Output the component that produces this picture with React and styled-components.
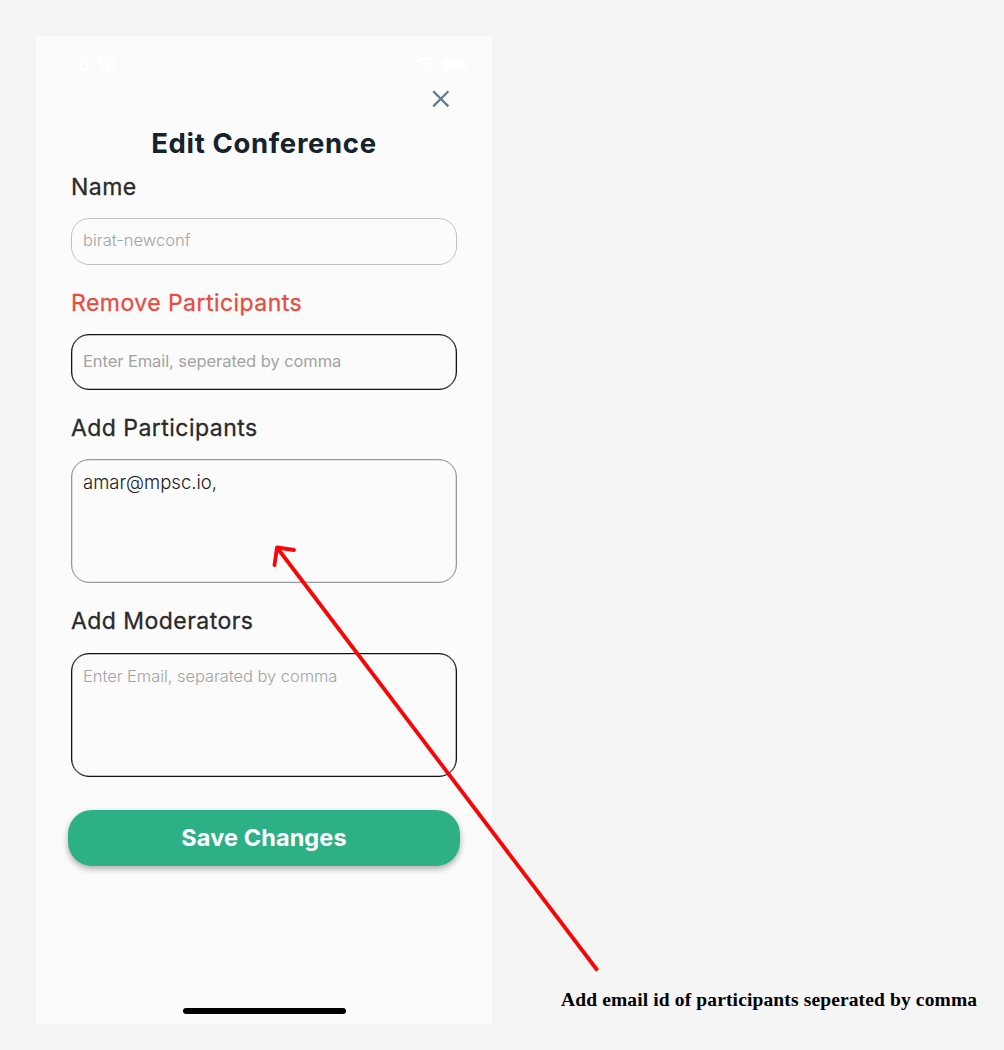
import React from 'react';
import styled, { createGlobalStyle } from 'styled-components';

const GlobalStyle = createGlobalStyle`
  *, *::before, *::after { box-sizing: border-box; }
  body { margin: 0; background: #f5f5f5; }
`;

const Page = styled.main`
  position: relative;
  width: 1004px;
  height: 1050px;
  padding: 36px 0 0 36px;
  display: flex;
  align-items: flex-start;
  overflow: hidden;
  background: #f5f5f5;
  font-family: Inter, Roboto, sans-serif;
`;

const Phone = styled.section`
  width: 456px;
  height: 988px;
  display: flex;
  flex-direction: column;
  background: #fbfbfb;
`;

const StatusBar = styled.div`
  height: 50px;
  padding: 16px 21px 0 42px;
  display: flex;
  justify-content: space-between;
  color: #fff;
`;

const Time = styled.span`
  font-size: 19px;
  font-weight: 600;
  line-height: 26px;
`;

const StatusIcons = styled.div`
  display: flex;
  gap: 7px;
  padding-top: 5px;
`;

const CloseButton = styled.button`
  width: 26px;
  height: 26px;
  padding: 0;
  border: 0;
  background: none;
  align-self: flex-end;
  margin-right: 38px;
`;

const Title = styled.h1`
  margin: 14px 0 0;
  height: 36px;
  text-align: center;
  font-size: 27.5px;
  font-weight: 700;
  line-height: 35px;
  letter-spacing: 0.65px;
  color: #15232d;
`;

const Form = styled.form`
  display: flex;
  flex-direction: column;
  padding: 10px 35px;
`;

const Label = styled.label`
  height: 30px;
  margin-bottom: ${({ $gap }) => $gap || '16px'};
  font-size: 23px;
  font-weight: 400;
  line-height: 30px;
  letter-spacing: 0.46px;
  color: ${({ $danger }) => ($danger ? '#e74c42' : '#2a2a2a')};
  -webkit-text-stroke: 0.3px currentColor;
`;

const Field = styled.div`
  height: ${({ $height }) => $height};
  margin-bottom: ${({ $after }) => $after};
  padding: ${({ $top }) => $top} 11px 0;
  border: 1px solid ${({ $stroke }) => $stroke};
  border-radius: 18px;
  box-shadow: ${({ $heavy, $stroke }) => ($heavy ? `inset 0 0 0 0.3px ${$stroke}` : 'none')};
  font-size: ${({ $size }) => $size || '16.5px'};
  font-weight: ${({ $weight }) => $weight || 300};
  line-height: 22px;
  letter-spacing: ${({ $track }) => $track || '0px'};
  color: ${({ $color }) => $color || '#a3a3a3'};
`;

const SaveButton = styled.button`
  height: 56px;
  margin: 0 -3px;
  padding: 0;
  border: 0;
  border-radius: 24px;
  background: #2eb086;
  box-shadow: 0 3px 6px rgba(0, 0, 0, 0.32);
  color: #fff;
  font-family: inherit;
  font-size: 23.5px;
  font-weight: 700;
  line-height: 56px;
  letter-spacing: 0.1px;
`;

const HomeIndicator = styled.div`
  width: 163px;
  height: 6px;
  margin: auto auto 10px 147px;
  border-radius: 3px;
  background: #000;
`;

const Arrow = styled.svg`
  position: absolute;
  inset: 0;
  pointer-events: none;
`;

const Note = styled.p`
  align-self: flex-end;
  margin: 0 0 37px 69px;
  font-family: "Liberation Serif", serif;
  font-size: 19.5px;
  font-weight: 700;
  line-height: 26px;
  letter-spacing: 0.13px;
  white-space: nowrap;
  color: #000;
`;

export default function App() {
  return (
    <Page>
      <GlobalStyle />
      <Phone>
        <StatusBar>
          <Time>6:16</Time>
          <StatusIcons>
            <svg width="20" height="15" viewBox="0 0 20 15" fill="none" stroke="#fff" strokeWidth="2.5">
              <path d="M1.5 5Q10-1.7 18.5 5M4.6 8.4Q10 4.3 15.4 8.4" />
              <path d="M7 11Q10 9 13 11L10 14Z" fill="#fff" stroke="none" />
            </svg>
            <svg width="29" height="15" viewBox="0 0 29 15">
              <rect x=".5" y=".5" width="25" height="13" rx="4" fill="none" stroke="#fff" strokeOpacity=".5" />
              <rect x="2" y="2" width="22" height="10" rx="2.5" fill="#fff" />
              <path d="M27 5q2 2 0 4z" fill="#fff" fillOpacity=".5" />
            </svg>
          </StatusIcons>
        </StatusBar>
        <CloseButton aria-label="Close">
          <svg width="26" height="26" viewBox="0 0 26 26" stroke="#5c7c8a" strokeWidth="2.2">
            <path d="M5.2 5.2 20.4 20.4M20.4 5.2 5.2 20.4" />
          </svg>
        </CloseButton>
        <Title>Edit Conference</Title>
        <Form>
          <Label>Name</Label>
          <Field $height="47px" $after="23px" $top="10px" $stroke="#c2c2c2">
            birat-newconf
          </Field>
          <Label $danger>Remove Participants</Label>
          <Field $height="56px" $after="23px" $top="15px" $stroke="#111" $heavy $weight={400} $track="-0.08px">
            Enter Email, seperated by comma
          </Field>
          <Label>Add Participants</Label>
          <Field $height="124px" $after="23px" $top="11px" $stroke="#999" $heavy $size="18.5px" $color="#222">
            amar@mpsc.io,
          </Field>
          <Label $gap="17px">Add Moderators</Label>
          <Field $height="124px" $after="33px" $top="11px" $stroke="#111" $heavy $track="-0.06px">
            Enter Email, separated by comma
          </Field>
          <SaveButton type="button">Save Changes</SaveButton>
        </Form>
        <HomeIndicator />
      </Phone>
      <Note>Add email id of participants seperated by comma</Note>
      <Arrow width="1004" height="1050" viewBox="0 0 1004 1050" fill="none" stroke="#fa0505" strokeWidth="3.8">
        <path d="M277 547.5 597.5 970.5" />
        <path d="M274.5 565 277 547.5 294 550" strokeLinecap="round" strokeLinejoin="round" />
      </Arrow>
    </Page>
  );
}
